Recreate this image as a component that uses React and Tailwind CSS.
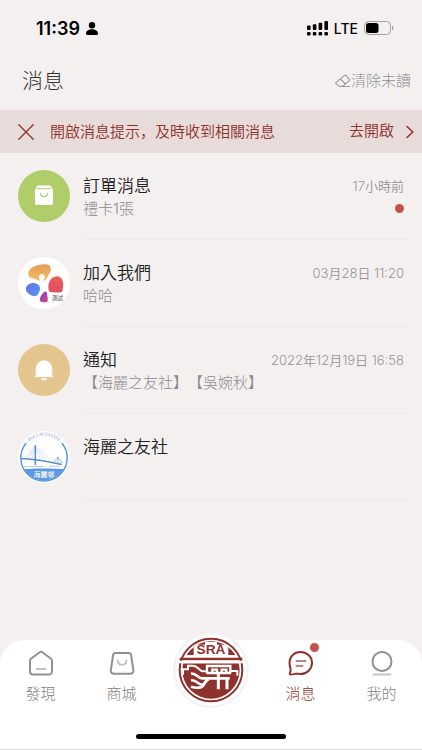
import React, { useState } from "react";

const EraserIcon = () => (
  <svg width="16" height="14" viewBox="0 0 16 14" fill="none" stroke="#9b9998" strokeWidth="1.1" strokeLinejoin="round">
    <path d="M1.2 8.4 9.6 1.3a1 1 0 0 1 1.4.1l3.4 3.9a1 1 0 0 1-.1 1.4L7.6 12.4H4.8L1.1 9.8a1 1 0 0 1 .1-1.4Z" />
    <path d="m5.3 5 5.2 5M4.8 12.5H15" />
  </svg>
);

const SignalIcon = () => (
  <svg width="21" height="15" viewBox="0 0 21 15" fill="#000">
    <rect x="0" y="4.5" width="3.6" height="4.5" rx="1" />
    <rect x="5.8" y="3.2" width="3.6" height="5.8" rx="1" />
    <rect x="11.6" y="1.8" width="3.6" height="7.2" rx="1" />
    <rect x="17.4" y="0" width="3.6" height="9" rx="1" />
    <rect x="0" y="11" width="3.6" height="3.6" rx="1.1" />
    <rect x="5.8" y="11" width="3.6" height="3.6" rx="1.1" />
    <rect x="11.6" y="11" width="3.6" height="3.6" rx="1.1" />
    <rect x="17.4" y="11" width="3.6" height="3.6" rx="1.1" />
  </svg>
);

const BatteryIcon = () => (
  <svg width="30" height="14" viewBox="0 0 30 14" fill="none">
    <rect x="0.5" y="0.5" width="26" height="13" rx="4" stroke="#a3a09f" />
    <rect x="2" y="2" width="12.5" height="10" rx="2.5" fill="#000" />
    <path d="M28 4.8c1 .4 1.5 1.2 1.5 2.2s-.5 1.8-1.5 2.2Z" fill="#a3a09f" />
  </svg>
);

const PersonIcon = () => (
  <svg width="12" height="13" viewBox="0 0 12 13" fill="#000">
    <circle cx="6" cy="3.2" r="3.2" />
    <path d="M0 11.8C0 8.8 2.6 7.2 6 7.2s6 1.6 6 4.6c0 .7-.4 1.2-1.1 1.2H1.1C.4 13 0 12.5 0 11.8Z" />
  </svg>
);

const OrderAvatar = () => (
  <svg viewBox="0 0 52 52" className="size-full">
    <circle cx="26" cy="26" r="26" fill="#afcd68" />
    <path d="M19.6 16h12.800l2.200 4H17.400Z" fill="#fff" stroke="#fff" strokeLinejoin="round" />
    <path d="M17 19.700h18V33a2 2 0 0 1-2 2H19a2 2 0 0 1-2-2Z" fill="#fff" />
    <path d="M22.300 23.400c.5 4.200 6.900 4.200 7.400 0" fill="none" stroke="#afcd68" strokeWidth="1.300" strokeLinecap="round" />
    <path d="M19.200 18.700h13.600" stroke="#afcd68" strokeWidth="1" strokeLinecap="round" />
  </svg>
);

const JoinAvatar = () => (
  <svg viewBox="0 0 52 52" className="size-full">
    <defs>
      <linearGradient id="petalTop" x1="0" y1="0" x2="0" y2="1">
        <stop offset="0" stopColor="#e99a55" />
        <stop offset="1" stopColor="#f3c063" />
      </linearGradient>
      <linearGradient id="petalLeft" x1="0" y1="0" x2="1" y2="1">
        <stop offset="0" stopColor="#6f6fe0" />
        <stop offset="1" stopColor="#4a9af5" />
      </linearGradient>
      <linearGradient id="petalRight" x1="0" y1="0" x2="0" y2="1">
        <stop offset="0" stopColor="#e8615b" />
        <stop offset="1" stopColor="#e14c63" />
      </linearGradient>
      <linearGradient id="petalBottom" x1="0" y1="0" x2="1" y2="1">
        <stop offset="0" stopColor="#8145c9" />
        <stop offset="1" stopColor="#d1458f" />
      </linearGradient>
    </defs>
    <circle cx="26" cy="26" r="26" fill="#fff" />
    <path d="M10.300 17.200C9.800 10.400 20 6.600 27.800 7.200c5.600.4 6.200 5 3.600 9.400-1.400 2.400-2.500 5.800-5 7.100-3.200 1.600-6.800-1-9.800-1.900-3-.9-6.100-1.300-6.300-4.600Z" fill="url(#petalTop)" />
    <circle cx="23.800" cy="20" r="2.900" fill="#fff" />
    <path d="M22.500 21.500h2.600l.8 3.500h-4.200Z" fill="#fff" />
    <path d="M7.900 31.500c.4-4.500 7.100-6.900 11.300-4.500 4 2.300 3.200 6.900.8 10.200-2.200 3-6.200 2.200-8.800.1-2-1.500-3.500-3.400-3.300-5.800Z" fill="url(#petalLeft)" />
    <path d="M32.500 22.800c3-4.400 9.400-5.300 11.700-.2 1.600 3.600 1.100 8.500-.2 12.400-3.800.8-8 .6-12.500-.3-1.900-3.500-1.400-8.500 1-11.900Z" fill="url(#petalRight)" />
    <path d="M21.800 43.500c-.3-3.600 3.300-8.700 5.900-9 1.800-.2 1.200 3.300 1.800 5.500.5 1.800.3 3.900-.1 5-2.200.4-7.300.5-7.600-1.500Z" fill="url(#petalBottom)" />
    <text x="34" y="42.500" fontSize="5.500" fill="#444" fontFamily="Noto Sans CJK TC, sans-serif">測試</text>
  </svg>
);

const NoticeAvatar = () => (
  <svg viewBox="0 0 52 52" className="size-full">
    <circle cx="26" cy="26" r="26" fill="#e4c58e" />
    <path d="M18.200 31V24.500a7.800 7.800 0 0 1 15.600 0V31l1.400 1.600H16.800Z" fill="#fff" stroke="#fff" strokeWidth=".8" strokeLinejoin="round" />
    <rect x="23.300" y="34.200" width="5.600" height="2" rx="1" fill="#fff" />
  </svg>
);

const EstateAvatar = () => (
  <svg viewBox="0 0 52 52" className="size-full">
    <defs>
      <clipPath id="estateClip">
        <circle cx="26" cy="26.500" r="23" />
      </clipPath>
      <path id="estateArc" d="M7 16A21.500 21.500 0 0 1 45 16" />
    </defs>
    <circle cx="26" cy="26" r="26" fill="#fff" />
    <path d="M8.200 12A23.200 23.200 0 1 0 43.800 12" fill="none" stroke="#5b97de" strokeWidth="1.500" />
    <text fontSize="4.400" fill="#5f92d0" fontFamily="Liberation Serif, serif">
      <textPath href="#estateArc" startOffset="50%" textAnchor="middle">HOI LAI ESTATE</textPath>
    </text>
    <path d="M17.300 14.500 7 28M17.300 15.500 10.500 28M17.300 17 13.500 29M17.300 14.500 31 28M17.300 16 27 28.500M17.300 17.500 22.500 28" stroke="#b4d0ef" strokeWidth=".6" />
    <path d="M17.300 14v20" stroke="#5b8ecb" strokeWidth="1.500" />
    <path d="M3.500 27.500C15 28 28 30 44 33.500" fill="none" stroke="#5b8ecb" strokeWidth="1.300" />
    <path d="m40 26-4 5.500M40 26l4 6M40 25.500v8" stroke="#7faadb" strokeWidth=".8" />
    <path d="M6 35.500h20M31 35.300h11" stroke="#9fc1e8" strokeWidth=".8" />
    <path d="M0 38.500C16 37 36 37 52 38.500V52H0Z" fill="#5b97e3" clipPath="url(#estateClip)" />
    <text x="26" y="45.500" textAnchor="middle" fontSize="7" fontWeight="500" fill="#fff" fontFamily="Noto Sans CJK TC, sans-serif">海麗邨</text>
  </svg>
);

const CenterLogo = () => (
  <svg viewBox="0 0 228 228" className="size-19">
    <defs>
      <clipPath id="sealClip">
        <circle cx="114" cy="114" r="86" />
      </clipPath>
    </defs>
    <circle cx="114" cy="114" r="114" fill="#f5f2f2" />
    <circle cx="114" cy="114" r="107" fill="#fff" />
    <circle cx="114" cy="114" r="94" fill="none" stroke="#8f322d" strokeWidth="6" />
    <g clipPath="url(#sealClip)">
      <rect x="20" y="20" width="190" height="49" fill="#8f322d" />
      <path d="M62 38h34v-8h36v8h34v34H62Z" fill="#fff" />
      <rect x="20" y="94" width="190" height="120" fill="#8f322d" />
    </g>
    <text x="114" y="67" textAnchor="middle" fontSize="41" fontWeight="700" fontFamily="Liberation Sans, sans-serif" fill="#8f322d">SRA</text>
    <path d="M20 81h188" stroke="#8f322d" strokeWidth="7" />
    <path d="M16 90h196" stroke="#fff" strokeWidth="8" />
    <path d="M30 128v-16h15v-11h14c18 0 18 17 32 17h12" fill="none" stroke="#fff" strokeWidth="6" />
    <path d="M54 125c17-3 20 15 34 14h82" fill="none" stroke="#fff" strokeWidth="8" />
    <path d="M54 145c17-3 20 14 34 13 10-1 8-15 18-18" fill="none" stroke="#fff" strokeWidth="8" />
    <path d="M54 164c14 4 30 5 37-4 6-7 6-15 17-19" fill="none" stroke="#fff" strokeWidth="8" />
    <path d="M102 124v-22h70v22M118 122v-9h14v9M146 122v-9h14v9M100 123h74" fill="none" stroke="#fff" strokeWidth="7" />
    <path d="M173 117h20v14" fill="none" stroke="#fff" strokeWidth="6" />
    <path d="M136 126v46M162 139v33" fill="none" stroke="#fff" strokeWidth="9" />
  </svg>
);

const HomeIcon = () => (
  <svg width="28" height="28" viewBox="0 0 28 28" fill="none" stroke="#929090" strokeWidth="2" strokeLinejoin="round" strokeLinecap="round">
    <path d="M12.700 3.300 4.200 9.500a3 3 0 0 0-1.200 2.400V22.500a3 3 0 0 0 3 3H22a3 3 0 0 0 3-3V11.900a3 3 0 0 0-1.200-2.400L15.300 3.300a2.200 2.200 0 0 0-2.600 0Z" />
    <path d="M9.500 20h9" stroke="#c3c1c1" />
  </svg>
);

const MallIcon = () => (
  <svg width="28" height="28" viewBox="0 0 28 28" fill="none" stroke="#929090" strokeWidth="2" strokeLinejoin="round" strokeLinecap="round">
    <path d="M7.600 4h13a2.500 2.500 0 0 1 2.500 2.100l2.300 15.300a3 3 0 0 1-3 3.400H5.800a3 3 0 0 1-3-3.400L5.100 6.100A2.500 2.500 0 0 1 7.600 4Z" />
    <path d="M9.800 11.500c.5 5.700 8.100 5.700 8.600 0" stroke="#c3c1c1" />
  </svg>
);

const MessageIcon = () => (
  <svg width="28" height="28" viewBox="0 0 28 28" fill="none" stroke="#8f322d" strokeWidth="2" strokeLinejoin="round" strokeLinecap="round">
    <path d="M13.300 3C19.700 3 25 7.700 25 13.800S20 25 13.500 25c-1.900 0-3.200-.6-5-.2-1.700.3-3.800.7-5.100.6-.8-.1-.8-.9-.5-1.500.8-1.500 1-2.700.6-4.500-.7-2-1-3.500-1-5.600C2.500 7.700 7 3 13.300 3Z" />
    <path d="M9.500 12h9M9.500 17h6" stroke="#c5827f" />
  </svg>
);

const MineIcon = () => (
  <svg width="28" height="28" viewBox="0 0 28 28" fill="none" stroke="#929090" strokeWidth="2" strokeLinecap="round">
    <circle cx="14" cy="12.500" r="9.500" />
    <path d="M5.500 25.500h17" stroke="#c3c1c1" />
  </svg>
);

const messages = [
  { id: 1, title: "訂單消息", text: "禮卡1張", time: "17小時前", unread: true, Avatar: OrderAvatar },
  { id: 2, title: "加入我們", text: "哈哈", time: "03月28日 11:20", Avatar: JoinAvatar },
  { id: 3, title: "通知", text: "【海麗之友社】【吳婉秋】", time: "2022年12月19日 16:58", Avatar: NoticeAvatar },
  { id: 4, title: "海麗之友社", Avatar: EstateAvatar },
];

const tabs = [
  { label: "發現", Icon: HomeIcon },
  { label: "商城", Icon: MallIcon },
  { label: "SRA", Icon: CenterLogo, center: true },
  { label: "消息", Icon: MessageIcon, badge: true },
  { label: "我的", Icon: MineIcon },
];

const App = () => {
  const [showTip, setShowTip] = useState(true);
  const [activeTab, setActiveTab] = useState("消息");

  return (
    <div className="flex min-h-screen flex-col bg-[#f4f0f0] font-['Inter','Noto_Sans_CJK_TC',sans-serif] text-[#333] [text-spacing-trim:space-all]">
      <div className="flex h-14 items-center justify-between pr-7 pl-9 text-black">
        <div className="flex items-center gap-1.5 text-[18px] font-semibold">
          11:39
          <PersonIcon />
        </div>
        <div className="flex items-center gap-1.5 text-[14px] font-medium">
          <SignalIcon />
          LTE
          <BatteryIcon />
        </div>
      </div>

      <header className="flex items-center justify-between pt-2.5 pr-[11px] pb-3.5 pl-[22px]">
        <h1 className="text-[21px] leading-[30px] font-light">消息</h1>
        <button type="button" className="flex items-center text-[15px] leading-5 font-light text-[#929090]">
          <EraserIcon />
          清除未讀
        </button>
      </header>

      {showTip && (
        <div className="flex h-[43px] items-center bg-[#e8dcdb] pr-2 pl-[18px] text-[15px] font-[350] text-[#8f322d]">
          <button type="button" aria-label="關閉" onClick={() => setShowTip(false)}>
            <svg width="16" height="16" viewBox="0 0 16 16" stroke="currentColor" strokeWidth="1.300" strokeLinecap="round">
              <path d="m.8.8 14.400 14.400M15.200.8.8 15.200" />
            </svg>
          </button>
          <p className="ml-4 flex-1 font-['Noto_Sans_CJK_SC',sans-serif]" lang="zh-Hans">
            開啟消息提示，及時收到相關消息
          </p>
          <button type="button" className="flex items-center gap-3">
            去開啟
            <svg width="8" height="14" viewBox="0 0 8 14" fill="none" stroke="currentColor" strokeWidth="1.500" strokeLinecap="round">
              <path d="m1 1.500 5.800 5.500L1 12.500" />
            </svg>
          </button>
        </div>
      )}

      <ul className="pr-[14px] pl-[18px]">
        {messages.map(({ id, title, text, time, unread, Avatar }) => (
          <li key={id} className="flex gap-[13px]">
            <div className="mt-[17px] size-[52px] shrink-0">
              <Avatar />
            </div>
            <div className="flex h-[87px] flex-1 justify-between border-b border-[#eeeaea] pt-[21px] pr-1">
              <div>
                <h2 className="text-[17px] leading-6 font-[350] text-[#222]">{title}</h2>
                {text && <p className="text-[15px] leading-[22px] font-light text-[#8d8b8b]">{text}</p>}
              </div>
              <div className="flex flex-col items-end">
                <time className="text-[13px] leading-6 font-[350] text-[#979595]">{time}</time>
                {unread && <span className="mt-1.5 size-[9px] rounded-full bg-[#c5524a]" />}
              </div>
            </div>
          </li>
        ))}
      </ul>

      <nav className="mt-auto rounded-t-3xl bg-white">
        <div className="grid grid-cols-[1fr_1fr_98px_1fr_1fr] items-start">
          {tabs.map(({ label, Icon, center, badge }) =>
            center ? (
              <button key={label} type="button" aria-label={label} className="-mt-2 flex justify-center">
                <Icon />
              </button>
            ) : (
              <button
                key={label}
                type="button"
                onClick={() => setActiveTab(label)}
                className={`flex flex-col items-center gap-1.5 pt-[9px] text-[15px] leading-[22px] font-light ${
                  activeTab === label ? "text-[#8f322d]" : "text-[#838181]"
                }`}
              >
                <span className="relative">
                  <Icon />
                  {badge && <span className="absolute -top-1.5 -right-1 size-[9px] rounded-full bg-[#c5524a]" />}
                </span>
                {label}
              </button>
            )
          )}
        </div>
        <div className="flex h-[42px] items-center justify-center border-b border-[#dcdcdc] pt-5 pb-1">
          <div className="h-[5px] w-[150px] rounded-full bg-black" />
        </div>
      </nav>
    </div>
  );
};

export default App;
